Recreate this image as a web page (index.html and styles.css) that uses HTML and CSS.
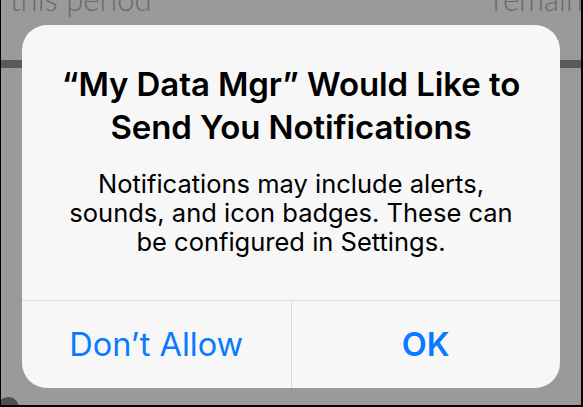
FILE: index.html
```html
<!DOCTYPE html>
<html>
<head>
    <title>Notifications Permission</title>
    <link rel="stylesheet" href="styles.css">
</head>
<body>
    <div class="screen">
        <div class="backdrop">
            <span class="period">this period</span>
            <span class="remain">remain</span>
        </div>
        <div class="bar"></div>
        <div class="dot"></div>

        <div class="alert">
            <div class="alert-body">
                <h1>“My Data Mgr” Would Like to Send You Notifications</h1>
                <p>Notifications may include alerts, sounds, and icon badges. These can be configured in Settings.</p>
            </div>
            <div class="actions">
                <button class="btn">Don’t Allow</button>
                <button class="btn btn-ok">OK</button>
            </div>
        </div>
    </div>
</body>
</html>
```

FILE: styles.css
```css
body {
    margin: 0;
    background: #000;
    font-family: "Inter", "Liberation Sans", sans-serif;
}
.screen {
    position: relative;
    width: 583px;
    height: 407px;
    box-sizing: border-box;
    border-left: 1px solid #000;
    border-right: 2px solid #000;
    border-bottom: 2px solid #000;
    background: #9a9a9a;
    overflow: hidden;
}
.backdrop {
    display: flex;
    justify-content: space-between;
    margin-top: -20px;
    padding-left: 9px;
    font-family: "Lato", sans-serif;
    font-weight: 300;
    font-size: 31px;
    color: #6a6a6a;
    white-space: nowrap;
}
.remain {
    margin-right: -2px;
}
.bar {
    margin-top: 42px;
    height: 8px;
    background: #5a5a5a;
}
.dot {
    position: absolute;
    left: -4px;
    bottom: -14px;
    width: 22px;
    height: 22px;
    border-radius: 50%;
    background: #4f4f4f;
}
.alert {
    position: absolute;
    left: 21px;
    top: 25px;
    width: 538px;
    height: 363px;
    background: #f7f7f7;
    border-radius: 25px;
    display: flex;
    flex-direction: column;
    overflow: hidden;
}
.alert-body {
    flex: 1;
    padding: 38px 34px 0;
    text-align: center;
    color: #000;
}
h1 {
    margin: 0;
    font-size: 33px;
    font-weight: 600;
    line-height: 43px;
    letter-spacing: -0.1px;
}
p {
    margin: 20px 0 0;
    font-size: 25.5px;
    line-height: 29px;
    letter-spacing: 0;
}
.actions {
    display: flex;
    height: 87px;
    border-top: 1px solid #dadada;
}
.btn {
    flex: 1;
    border: none;
    background: none;
    font-family: inherit;
    font-size: 32.5px;
    color: #0a7aff;
    padding: 0;
}
.btn + .btn {
    border-left: 1px solid #dadada;
}
.btn-ok {
    font-weight: 600;
}
```
